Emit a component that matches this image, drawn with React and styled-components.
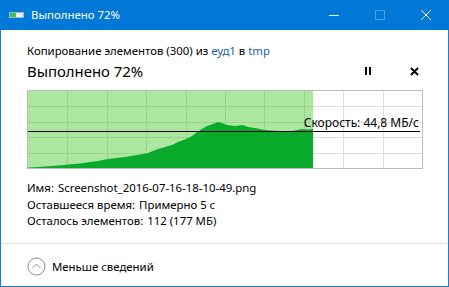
import styled, { createGlobalStyle } from "styled-components";

const GlobalStyle = createGlobalStyle`
  html, body {
    margin: 0;
    padding: 0;
    background: #ffffff;
  }
  body {
    font-family: "Noto Sans", "Open Sans", "DejaVu Sans", sans-serif;
    color: #000000;
  }
`;

// Window frame
const Window = styled.div`
  width: 449px;
  height: 287px;
  display: flex;
  flex-direction: column;
  overflow: hidden;
`;

const TitleBar = styled.div`
  height: 30px;
  flex-shrink: 0;
  background: #0078d7;
  display: flex;
  align-items: center;
  color: #ffffff;
`;

const TitleIcon = styled.div`
  width: 16px;
  height: 16px;
  margin-left: 8px;
  display: flex;
  align-items: center;
`;

const TitleText = styled.div`
  margin-left: 7px;
  font-size: 11.4px;
  line-height: 16px;
  flex: 1;
`;

const CaptionButton = styled.div`
  width: 46px;
  height: 30px;
  display: flex;
  align-items: center;
  justify-content: center;
  opacity: ${(p) => (p.disabled ? 0.3 : 1)};
`;

const Body = styled.div`
  flex: 1;
  display: flex;
  flex-direction: column;
  border: 1px solid #1a7fd4;
  border-top: none;
`;

const Content = styled.div`
  padding: 13px 25px 0 26px;
  display: flex;
  flex-direction: column;
`;

const FromTo = styled.div`
  font-size: 11.4px;
  line-height: 16px;
`;

const Link = styled.span`
  color: #1b5fb0;
`;

const StatusRow = styled.div`
  margin-top: 1px;
  height: 22px;
  display: flex;
  align-items: center;
  justify-content: space-between;
`;

const BigTitle = styled.div`
  font-size: 14.9px;
  line-height: 22px;
`;

const Controls = styled.div`
  display: flex;
  gap: 30px;
  padding-right: 1px;
`;

const ControlButton = styled.div`
  width: 16px;
  height: 16px;
  display: flex;
  align-items: center;
  justify-content: center;
`;

const Graph = styled.div`
  position: relative;
  margin-top: 8px;
  width: 396px;
  height: 79px;
  box-sizing: border-box;
  border: 1px solid #bdbdbd;
  svg {
    display: block;
  }
`;

const SpeedLabel = styled.div`
  position: absolute;
  right: 3px;
  top: 24px;
  font-size: 12px;
  line-height: 16px;
  white-space: nowrap;
`;

const Details = styled.div`
  margin-top: 11px;
  display: flex;
  flex-direction: column;
`;

const DetailLine = styled.div`
  font-size: 11.4px;
  line-height: 16.5px;
  white-space: nowrap;
`;

const Value = styled.span`
  margin-left: 4px;
`;

const Footer = styled.div`
  margin-top: auto;
  height: 43px;
  box-sizing: border-box;
  border-top: 1px solid #e3e3e3;
  padding: 2px 0 0 26px;
  display: flex;
  align-items: center;
  gap: 6px;
  font-size: 11.4px;
`;

const W = 394;
const H = 77;
const FILL_END = 285;
const SPEED_Y = 40;

const area = [
  [0, 77], [0, 76.6], [10, 76], [30, 74.5], [52, 72.5], [70, 70], [80, 68],
  [97, 66], [112, 63.5], [120, 62], [130, 58], [144, 54], [150, 51],
  [158, 48], [164, 45], [172, 39], [179, 35], [185, 33], [190, 31],
  [195, 32.5], [199, 34], [207, 35], [215, 34], [220, 36], [227, 37],
  [237, 39], [250, 40], [258, 40.5], [264, 40], [274, 38], [280, 38.5],
  [285, 38], [285, 77],
];

const Chart = () => {
  const cols = [];
  for (let i = 1; i < 10; i++) cols.push(Math.round((W / 10) * i) + 0.5);
  const rows = [];
  for (let i = 1; i < 5; i++) rows.push(Math.round((H / 5) * i) + 0.5);

  return (
    <svg width={W} height={H} viewBox={`0 0 ${W} ${H}`}>
      <rect x="0" y="0" width={FILL_END} height={H} fill="#ace79f" />
      {cols.map((x) => (
        <line key={`c${x}`} x1={x} y1="0" x2={x} y2={H}
          stroke={x < FILL_END ? "#97d489" : "#dedede"} strokeWidth="1" />
      ))}
      {rows.map((y) => (
        <g key={`r${y}`}>
          <line x1="0" y1={y} x2={FILL_END} y2={y} stroke="#97d489" strokeWidth="1" />
          <line x1={FILL_END} y1={y} x2={W} y2={y} stroke="#dedede" strokeWidth="1" />
        </g>
      ))}
      <polygon points={area.map((p) => p.join(",")).join(" ")} fill="#09aa2b" />
      <line x1="0" y1={SPEED_Y + 0.5} x2={W - 2} y2={SPEED_Y + 0.5} stroke="#000000" strokeWidth="1" />
    </svg>
  );
};

export default function App() {
  return (
    <>
      <GlobalStyle />
      <Window>
        <TitleBar>
          <TitleIcon>
            <svg width="16" height="16" viewBox="0 0 16 16">
              <rect x="1.5" y="5.5" width="14" height="5" fill="#e8eef2" stroke="#9fb6c4" />
              <rect x="2" y="6" width="6" height="4" fill="#3cc05a" />
            </svg>
          </TitleIcon>
          <TitleText>Выполнено 72%</TitleText>
          <CaptionButton>
            <svg width="10" height="10" viewBox="0 0 10 10">
              <line x1="0" y1="5.5" x2="10" y2="5.5" stroke="#ffffff" strokeWidth="1" />
            </svg>
          </CaptionButton>
          <CaptionButton disabled>
            <svg width="10" height="10" viewBox="0 0 10 10">
              <rect x="0.5" y="0.5" width="9" height="9" fill="none" stroke="#ffffff" strokeWidth="1" />
            </svg>
          </CaptionButton>
          <CaptionButton>
            <svg width="10" height="10" viewBox="0 0 10 10">
              <path d="M0 0 L10 10 M10 0 L0 10" stroke="#ffffff" strokeWidth="1" />
            </svg>
          </CaptionButton>
        </TitleBar>
        <Body>
          <Content>
            <FromTo>
              Копирование элементов (300) из <Link>еуд1</Link> в <Link>tmp</Link>
            </FromTo>
            <StatusRow>
              <BigTitle>Выполнено 72%</BigTitle>
              <Controls>
                <ControlButton>
                  <svg width="8" height="10" viewBox="0 0 8 10">
                    <rect x="1" y="1" width="2" height="8" fill="#000" />
                    <rect x="5" y="1" width="2" height="8" fill="#000" />
                  </svg>
                </ControlButton>
                <ControlButton>
                  <svg width="9" height="9" viewBox="0 0 9 9">
                    <path d="M1 1 L8 8 M8 1 L1 8" stroke="#000" strokeWidth="2" />
                  </svg>
                </ControlButton>
              </Controls>
            </StatusRow>
            <Graph>
              <Chart />
              <SpeedLabel>Скорость: 44,8 МБ/с</SpeedLabel>
            </Graph>
            <Details>
              <DetailLine>Имя:<Value>Screenshot_2016-07-16-18-10-49.png</Value></DetailLine>
              <DetailLine>Оставшееся время:<Value>Примерно 5 с</Value></DetailLine>
              <DetailLine>Осталось элементов:<Value>112 (177 МБ)</Value></DetailLine>
            </Details>
          </Content>
          <Footer>
            <svg width="19" height="19" viewBox="0 0 19 19">
              <circle cx="9.5" cy="9.5" r="8.5" fill="none" stroke="#8a8a8a" strokeWidth="1" />
              <path d="M5.5 11 L9.5 7 L13.5 11" fill="none" stroke="#8a8a8a" strokeWidth="1" />
            </svg>
            <span>Меньше сведений</span>
          </Footer>
        </Body>
      </Window>
    </>
  );
}
